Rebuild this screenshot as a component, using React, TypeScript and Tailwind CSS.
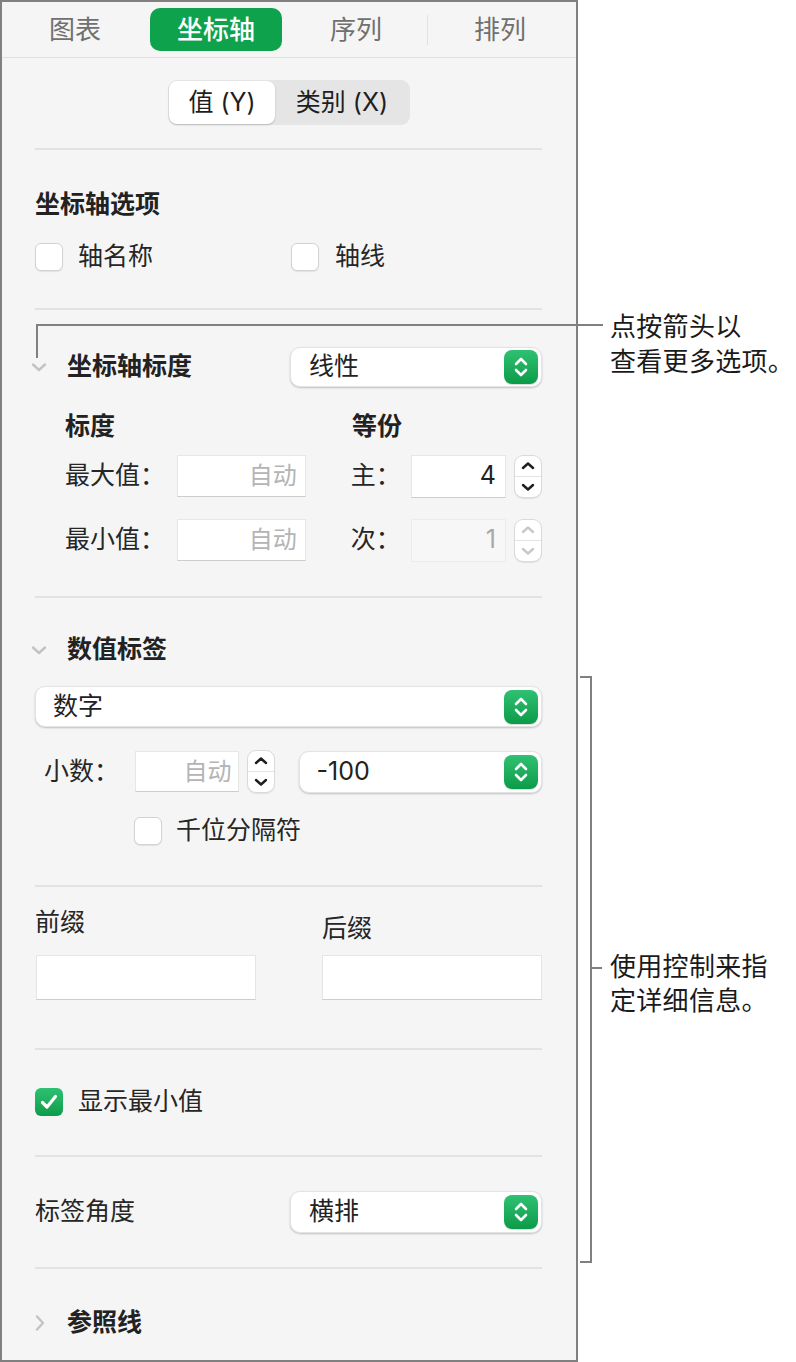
import React from "react";

function GreenArrows() {
  return (
    <div className="w-[34px] h-[34px] rounded-[8px] bg-linear-to-b from-[#2ec172] to-[#099b48] flex items-center justify-center shadow-[0_1px_1px_rgba(0,0,0,0.15)]">
      <svg width="16" height="24" viewBox="0 0 16 24" fill="none" stroke="white" strokeWidth="2.6" strokeLinecap="round" strokeLinejoin="round">
        <path d="M3 9 L8 4 L13 9" />
        <path d="M3 15 L8 20 L13 15" />
      </svg>
    </div>
  );
}

function Select({ label, className }: { label: string; className: string }) {
  return (
    <div className={className}>
      <span className="text-[25px] text-[#222]">{label}</span>
      <GreenArrows />
    </div>
  );
}

function Stepper({ disabled }: { disabled?: boolean }) {
  const c = disabled ? "#c9c9c9" : "#1e1e1e";
  return (
    <div className="w-[28px] h-[43px] bg-white rounded-[9px] border border-[#dadada] shadow-[0_1px_1px_rgba(0,0,0,0.08)] flex flex-col overflow-hidden">
      <div className="flex-1 flex items-center justify-center border-b border-[#e3e3e3]">
        <svg width="14" height="10" viewBox="0 0 14 10" fill="none" stroke={c} strokeWidth="2.4" strokeLinecap="round" strokeLinejoin="round">
          <path d="M2 7 L7 2.5 L12 7" />
        </svg>
      </div>
      <div className="flex-1 flex items-center justify-center">
        <svg width="14" height="10" viewBox="0 0 14 10" fill="none" stroke={c} strokeWidth="2.4" strokeLinecap="round" strokeLinejoin="round">
          <path d="M2 3 L7 7.5 L12 3" />
        </svg>
      </div>
    </div>
  );
}

function Checkbox() {
  return <div className="w-[28px] h-[28px] shrink-0 rounded-[6px] bg-white border border-[#d2d2d2] shadow-[0_1px_1px_rgba(0,0,0,0.08)]" />;
}

function CheckedBox() {
  return (
    <div className="w-[28px] h-[28px] shrink-0 rounded-[6px] bg-linear-to-b from-[#2ec172] to-[#0a9c4a] flex items-center justify-center">
      <svg width="20" height="18" viewBox="0 0 20 18" fill="none" stroke="white" strokeWidth="3.2" strokeLinecap="round" strokeLinejoin="round">
        <path d="M3.5 9.5 L8 14 L16.5 3.5" />
      </svg>
    </div>
  );
}

function ChevronDown() {
  return (
    <svg width="16" height="10" viewBox="0 0 16 10" fill="none" stroke="#c3c3c3" strokeWidth="2.4" strokeLinecap="round" strokeLinejoin="round" className="-ml-[4px]">
      <path d="M2 2.5 L8 8 L14 2.5" />
    </svg>
  );
}

function ChevronRight() {
  return (
    <svg width="10" height="18" viewBox="0 0 10 18" fill="none" stroke="#c3c3c3" strokeWidth="2.4" strokeLinecap="round" strokeLinejoin="round">
      <path d="M2 2.5 L8 9 L2 15.5" />
    </svg>
  );
}

function Divider({ className }: { className: string }) {
  return <div className={className} />;
}

export default function App() {
  const inputCls =
    "h-[42px] bg-white border border-[#e7e7e7] border-b-[#cdcdcd] flex items-center justify-end pr-[8px] text-[24px] text-[#b4b4b4]";
  return (
    <div className="relative w-[796px] h-[1362px] overflow-hidden bg-white font-['Inter','Noto_Sans_CJK_SC',sans-serif] text-[#262626]">
      <div className="w-[578px] h-[1362px] border-2 border-[#808080] bg-[#f5f5f5] flex flex-col">
        {/* Tab bar */}
        <div className="h-[56px] shrink-0 border-b border-[#e0e0e0] flex items-center pl-[33px]">
          <div className="w-[80px] text-center text-[26px] text-[#707070]">图表</div>
          <div className="ml-[35px] w-[132px] h-[43px] rounded-[10px] bg-[#0ea24d] text-white flex items-center justify-center text-[26px] font-medium">
            坐标轴
          </div>
          <div className="ml-[34px] w-[80px] text-center text-[26px] text-[#707070]">序列</div>
          <div className="ml-[31px] w-px h-[30px] bg-[#e2e2e2]" />
          <div className="ml-[32px] w-[80px] text-center text-[26px] text-[#707070]">排列</div>
        </div>

        <div className="pl-[33px] pr-[34px] flex flex-col">
          {/* Segmented */}
          <div className="mt-[22px] self-center ml-[1px] w-[242px] h-[45px] rounded-[9px] bg-[#e5e5e5] flex items-center p-[1px]">
            <div className="w-[106px] h-[43px] rounded-[8px] bg-white shadow-[0_1px_2px_rgba(0,0,0,0.2)] flex items-center justify-center text-[25px] text-[#1e1e1e]">
              值 (Y)
            </div>
            <div className="flex-1 flex items-center justify-center text-[25px] text-[#1e1e1e]">类别 (X)</div>
          </div>

          <Divider className="mt-[23px] h-[2px] bg-[#e2e2e2]" />

          {/* Axis options */}
          <div className="mt-[37px] h-[36px] flex items-center text-[25px] font-bold text-[#222]">坐标轴选项</div>
          <div className="mt-[16px] h-[36px] flex items-center text-[25px]">
            <div className="w-[256px] flex items-center">
              <Checkbox />
              <span className="ml-[15px]">轴名称</span>
            </div>
            <div className="flex items-center">
              <Checkbox />
              <span className="ml-[16px]">轴线</span>
            </div>
          </div>

          <Divider className="mt-[33px] h-[2px] bg-[#e2e2e2]" />

          {/* Axis scale */}
          <div className="mt-[37px] h-[40px] flex items-center">
            <div className="w-[32px] flex items-center">
              <ChevronDown />
            </div>
            <span className="text-[25px] font-bold text-[#222]">坐标轴标度</span>
            <Select
              label="线性"
              className="ml-auto w-[252px] h-[40px] bg-white rounded-[10px] border border-[#e4e4e4] shadow-[0_1px_2px_rgba(0,0,0,0.22)] flex items-center justify-between pl-[18px] pr-[3px]"
            />
          </div>

          <div className="mt-[22px] h-[36px] flex items-center pl-[30px] text-[25px] font-bold text-[#222]">
            <div className="w-[287px]">标度</div>
            <div>等份</div>
          </div>

          <div className="mt-[10px] h-[42px] flex items-center pl-[30px] text-[25px]">
            <div className="w-[113px]">最大值：</div>
            <div className={`w-[129px] ${inputCls}`}>自动</div>
            <div className="ml-[45px] w-[61px]">主：</div>
            <div className="w-[95px] h-[43px] bg-white border border-[#e7e7e7] border-b-[#cdcdcd] flex items-center justify-end pr-[9px] text-[25px] text-[#222]">
              4
            </div>
            <div className="ml-[8px]">
              <Stepper />
            </div>
          </div>

          <div className="mt-[22px] h-[42px] flex items-center pl-[30px] text-[25px]">
            <div className="w-[113px]">最小值：</div>
            <div className={`w-[129px] ${inputCls}`}>自动</div>
            <div className="ml-[45px] w-[61px]">次：</div>
            <div className="w-[95px] h-[43px] bg-[#f7f7f7] border border-[#ececec] flex items-center justify-end pr-[9px] text-[25px] text-[#a8a8a8]">
              1
            </div>
            <div className="ml-[8px]">
              <Stepper disabled />
            </div>
          </div>

          <Divider className="mt-[35px] h-[2px] bg-[#e2e2e2]" />

          {/* Value labels */}
          <div className="mt-[34px] h-[36px] flex items-center">
            <div className="w-[32px] flex items-center">
              <ChevronDown />
            </div>
            <span className="text-[25px] font-bold text-[#222]">数值标签</span>
          </div>

          <Select
            label="数字"
            className="mt-[18px] w-full h-[41px] bg-white rounded-[10px] border border-[#e4e4e4] shadow-[0_1px_2px_rgba(0,0,0,0.22)] flex items-center justify-between pl-[17px] pr-[3px]"
          />

          <div className="mt-[24px] h-[41px] flex items-center pl-[9px] text-[25px]">
            <div className="w-[91px]">小数：</div>
            <div className="w-[104px] h-[41px] bg-white border border-[#e7e7e7] border-b-[#cdcdcd] flex items-center justify-end pr-[6px] text-[24px] text-[#b4b4b4]">
              自动
            </div>
            <div className="ml-[8px]">
              <Stepper />
            </div>
            <Select
              label="-100"
              className="ml-[24px] w-[244px] h-[42px] bg-white rounded-[10px] border border-[#e4e4e4] shadow-[0_1px_2px_rgba(0,0,0,0.22)] flex items-center justify-between pl-[17px] pr-[3px]"
            />
          </div>

          <div className="mt-[21px] h-[36px] flex items-center pl-[99px] text-[25px]">
            <Checkbox />
            <span className="ml-[14px]">千位分隔符</span>
          </div>

          <Divider className="mt-[36px] h-[2px] bg-[#e2e2e2]" />

          {/* Prefix / Suffix */}
          <div className="mt-[18px] flex justify-between text-[25px]">
            <div className="w-[221px] flex flex-col">
              <div className="h-[36px] flex items-center">前缀</div>
              <div className="mt-[14px] ml-[1px] h-[45px] bg-white border border-[#e5e5e5] border-b-[#cdcdcd]" />
            </div>
            <div className="w-[220px] flex flex-col">
              <div className="mt-[6px] h-[36px] flex items-center">后缀</div>
              <div className="mt-[8px] h-[45px] bg-white border border-[#e5e5e5] border-b-[#cdcdcd]" />
            </div>
          </div>

          <Divider className="mt-[48px] h-[2px] bg-[#e2e2e2]" />

          <div className="mt-[34px] h-[36px] flex items-center text-[25px]">
            <CheckedBox />
            <span className="ml-[15px]">显示最小值</span>
          </div>

          <Divider className="mt-[35px] h-[2px] bg-[#e2e2e2]" />

          <div className="mt-[34px] h-[42px] flex items-center text-[25px]">
            <span>标签角度</span>
            <Select
              label="横排"
              className="ml-auto w-[252px] h-[42px] bg-white rounded-[10px] border border-[#e4e4e4] shadow-[0_1px_2px_rgba(0,0,0,0.22)] flex items-center justify-between pl-[18px] pr-[3px]"
            />
          </div>

          <Divider className="mt-[34px] h-[2px] bg-[#e2e2e2]" />

          <div className="mt-[36px] h-[36px] flex items-center">
            <div className="w-[32px] flex items-center">
              <ChevronRight />
            </div>
            <span className="text-[25px] font-bold text-[#222]">参照线</span>
          </div>
        </div>
      </div>

      {/* Callout lines */}
      <svg className="absolute left-0 top-0 pointer-events-none" width="796" height="1362" viewBox="0 0 796 1362" fill="none">
        <polyline points="37,358 37,325 603,325" stroke="#808080" strokeWidth="2" />
        <polyline points="580,677 591,677 591,1262 580,1262" stroke="#808080" strokeWidth="2" />
        <line x1="591" y1="968" x2="602" y2="968" stroke="#808080" strokeWidth="2" />
      </svg>

      <div className="absolute left-[610px] top-[309px] whitespace-nowrap text-[26px] tracking-[0.3px] leading-[35px] text-[#1a1a1a]">
        <div>点按箭头以</div>
        <div>查看更多选项。</div>
      </div>
      <div className="absolute left-[610px] top-[950px] whitespace-nowrap text-[26px] tracking-[0.3px] leading-[34px] text-[#1a1a1a]">
        <div>使用控制来指</div>
        <div>定详细信息。</div>
      </div>
    </div>
  );
}
